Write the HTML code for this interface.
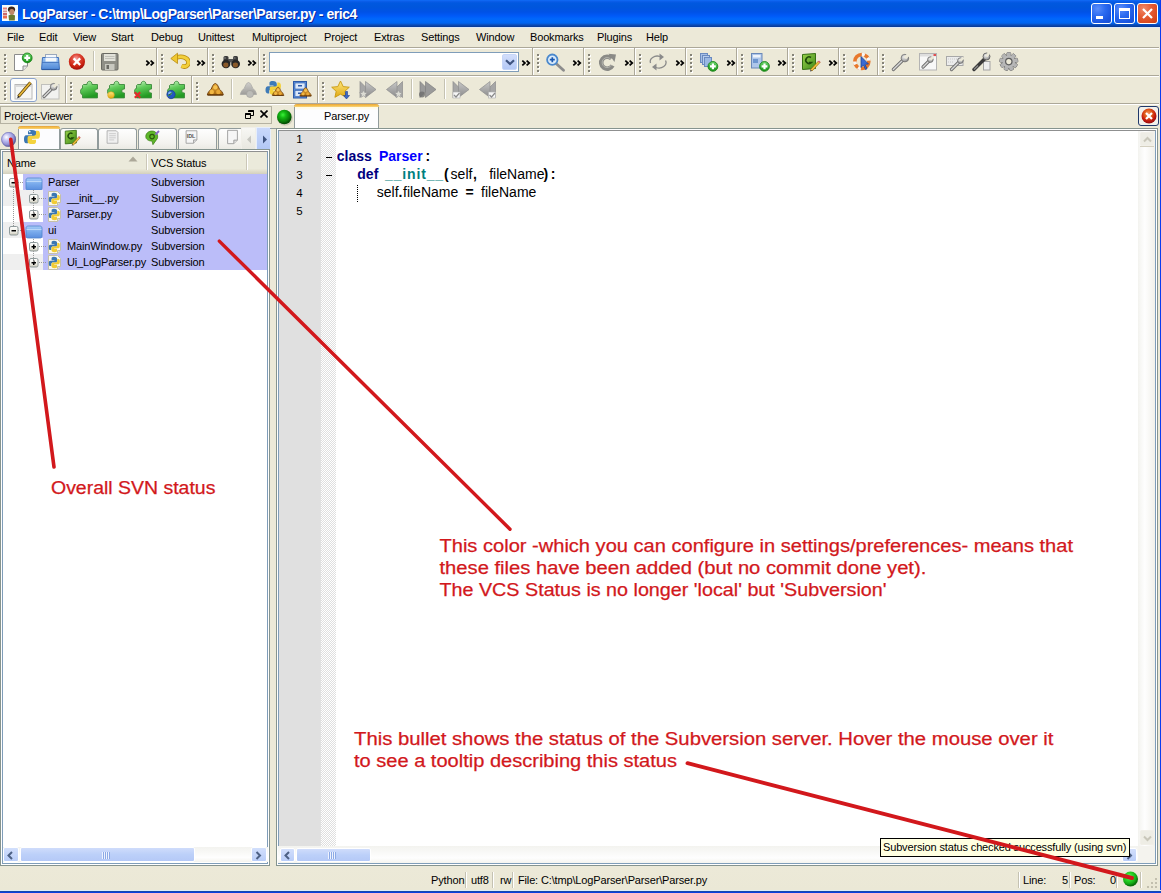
<!DOCTYPE html><html><head><meta charset="utf-8"><style>
*{margin:0;padding:0;box-sizing:border-box}
html,body{width:1161px;height:893px;overflow:hidden;background:#ECE9D8;font-family:"Liberation Sans",sans-serif;font-size:11px;color:#000}
.a{position:absolute}
.t{white-space:pre;line-height:13px;letter-spacing:-0.15px}
</style></head><body>
<div class="a" style="left:0px;top:0px;width:1161px;height:27px;background:linear-gradient(to bottom,#106cf8 0px,#0a5de8 1.5px,#0058e0 3px,#0056dc 7px,#0052e6 12px,#005af8 16px,#0068fc 19px,#0064f0 23px,#0a4ab8 25px,#083890 27px)"></div>
<div class="a" style="left:0px;top:27px;width:1161px;height:1px;background:#dce8f8"></div>
<svg class="a" style="left:2px;top:5px;" width="16" height="16" viewBox="0 0 16 16"><rect x="0" y="0" width="16" height="16" fill="#f4fbfb"/><rect x="1" y="2.5" width="4" height="2" fill="#e88080"/><rect x="1" y="5.5" width="4" height="1.8" fill="#d89090"/><rect x="1" y="8" width="4" height="2.5" fill="#c86a6a"/><rect x="1" y="11" width="4" height="2.5" fill="#e86a50"/><ellipse cx="9.5" cy="4.5" rx="3.6" ry="3" fill="#3a2418"/><ellipse cx="9.8" cy="7" rx="2.6" ry="3" fill="#c08868"/><path d="M6.5 10.5C7 9.5 12.5 9.5 13 10.5L12.8 15.5H7Z" fill="#6a7a30"/></svg>
<div class="a t" style="left:22px;top:8px;color:#fff;font-weight:bold;font-size:14px;text-shadow:1px 1px 0 #0a2a9a;letter-spacing:-0.45px">LogParser - C:\tmp\LogParser\Parser\Parser.py - eric4</div>
<div class="a" style="left:1091px;top:3px;width:21px;height:21px;border:1px solid #fff;border-radius:3px;background:radial-gradient(circle at 30% 25%,#5a8dfb 0%,#2a6af0 40%,#1a55e0 75%,#1b4fd0 100%)"><div class="a" style="left:4px;top:12px;width:7px;height:3px;background:#fff"></div></div>
<div class="a" style="left:1114px;top:3px;width:21px;height:21px;border:1px solid #fff;border-radius:3px;background:radial-gradient(circle at 30% 25%,#5a8dfb 0%,#2a6af0 40%,#1a55e0 75%,#1b4fd0 100%)"><div class="a" style="left:4px;top:4px;width:11px;height:11px;border:1px solid #fff;border-top-width:3px"></div></div>
<div class="a" style="left:1137px;top:3px;width:21px;height:21px;border:1px solid #fff;border-radius:3px;background:radial-gradient(circle at 30% 25%,#f08a6a 0%,#e55d36 40%,#d9491e 75%,#c43c14 100%)"><svg class="a" style="left:3px;top:3px" width="13" height="13" viewBox="0 0 13 13"><path d="M2 2L11 11M11 2L2 11" stroke="#fff" stroke-width="2.2"/></svg></div>
<div class="a" style="left:1160px;top:0px;width:1px;height:893px;background:#0a3cf0"></div>
<div class="a" style="left:0px;top:890px;width:1161px;height:1px;background:#dcecf8"></div>
<div class="a" style="left:0px;top:891px;width:1161px;height:1px;background:#1848a8"></div>
<div class="a" style="left:0px;top:892px;width:1161px;height:1px;background:#0a3ee0"></div>
<div class="a t" style="left:7px;top:31px;">File</div>
<div class="a t" style="left:39px;top:31px;">Edit</div>
<div class="a t" style="left:73px;top:31px;">View</div>
<div class="a t" style="left:111px;top:31px;">Start</div>
<div class="a t" style="left:151px;top:31px;">Debug</div>
<div class="a t" style="left:198px;top:31px;">Unittest</div>
<div class="a t" style="left:252px;top:31px;">Multiproject</div>
<div class="a t" style="left:324px;top:31px;">Project</div>
<div class="a t" style="left:374px;top:31px;">Extras</div>
<div class="a t" style="left:421px;top:31px;">Settings</div>
<div class="a t" style="left:476px;top:31px;">Window</div>
<div class="a t" style="left:530px;top:31px;">Bookmarks</div>
<div class="a t" style="left:597px;top:31px;">Plugins</div>
<div class="a t" style="left:646px;top:31px;">Help</div>
<div class="a" style="left:0px;top:47px;width:1159px;height:1px;background:#aca899"></div>
<div class="a" style="left:0px;top:48px;width:1159px;height:1px;background:#fff"></div>
<div class="a" style="left:0px;top:75px;width:1159px;height:1px;background:#aca899"></div>
<div class="a" style="left:0px;top:76px;width:1159px;height:1px;background:#fff"></div>
<div class="a" style="left:0px;top:103px;width:1159px;height:1px;background:#aca899"></div>
<div class="a" style="left:0px;top:104px;width:1159px;height:1px;background:#fff"></div>
<svg class="a" style="left:0px;top:0px;width:0;height:0" width="1" height="1" viewBox="0 0 1 1"><defs>
<linearGradient id="ggreen" x1="0" y1="0" x2="0" y2="1"><stop offset="0" stop-color="#6fd66f"/><stop offset="1" stop-color="#129312"/></linearGradient>
<radialGradient id="gred" cx="45%" cy="30%" r="70%"><stop offset="0" stop-color="#f6a0a0"/><stop offset=".35" stop-color="#e04a3a"/><stop offset=".75" stop-color="#c8200e"/><stop offset="1" stop-color="#9a0c0c"/></radialGradient>
<linearGradient id="gblue" x1="0" y1="0" x2="0" y2="1"><stop offset="0" stop-color="#9cc4f2"/><stop offset="1" stop-color="#4f88d8"/></linearGradient>
<linearGradient id="gpuz" x1="0" y1="0" x2="0.3" y2="1"><stop offset="0" stop-color="#d2f4cc"/><stop offset=".45" stop-color="#62cc5c"/><stop offset="1" stop-color="#239a23"/></linearGradient>
<linearGradient id="gyel" x1="0" y1="0" x2="0" y2="1"><stop offset="0" stop-color="#ffe880"/><stop offset="1" stop-color="#e0a810"/></linearGradient>
<linearGradient id="gpile" x1="0" y1="0" x2="0" y2="1"><stop offset="0" stop-color="#f0b040"/><stop offset="1" stop-color="#a86a10"/></linearGradient>
<linearGradient id="ggray" x1="0" y1="0" x2="0" y2="1"><stop offset="0" stop-color="#c8c8c8"/><stop offset="1" stop-color="#8a8a8a"/></linearGradient>
<linearGradient id="gsheet" x1="0" y1="0" x2="1" y2="1"><stop offset="0" stop-color="#9ad24a"/><stop offset="1" stop-color="#3f8a1a"/></linearGradient>
<radialGradient id="gsilver" cx="40%" cy="35%" r="70%"><stop offset="0" stop-color="#f0f0f0"/><stop offset="1" stop-color="#8a8a8a"/></radialGradient>
<linearGradient id="gbox" x1="0" y1="0" x2="0" y2="1"><stop offset="0" stop-color="#ffffff"/><stop offset=".6" stop-color="#efeee6"/><stop offset="1" stop-color="#c8c5b6"/></linearGradient>
<linearGradient id="gfold" x1="0" y1="0" x2="0" y2="1"><stop offset="0" stop-color="#a8ccf6"/><stop offset=".5" stop-color="#78aaec"/><stop offset="1" stop-color="#5a8ede"/></linearGradient>
</defs></svg>
<svg class="a" style="left:4px;top:54px;" width="4" height="20" viewBox="0 0 4 20"><rect x="1" y="1" width="2" height="2" fill="#fff"/><rect x="0" y="0" width="2" height="2" fill="#858378"/><rect x="1" y="5" width="2" height="2" fill="#fff"/><rect x="0" y="4" width="2" height="2" fill="#858378"/><rect x="1" y="9" width="2" height="2" fill="#fff"/><rect x="0" y="8" width="2" height="2" fill="#858378"/><rect x="1" y="13" width="2" height="2" fill="#fff"/><rect x="0" y="12" width="2" height="2" fill="#858378"/><rect x="1" y="17" width="2" height="2" fill="#fff"/><rect x="0" y="16" width="2" height="2" fill="#858378"/></svg>
<svg class="a" style="left:13px;top:52px;" width="20" height="20" viewBox="0 0 20 20"><path d="M1.5 2.5H14.5V14L10 18.5H1.5Z" fill="#fff" stroke="#8c8c8c"/><path d="M10 18.5V14H14.5" fill="#e4e4e4" stroke="#8c8c8c"/><circle cx="14.2" cy="5.9" r="4.9" fill="url(#ggreen)" stroke="#0b7a0b" stroke-width=".8"/><path d="M14.2 3.0000000000000004v5.8M11.299999999999999 5.9h5.8" stroke="#fff" stroke-width="2.2"/></svg>
<svg class="a" style="left:40px;top:52px;" width="20" height="20" viewBox="0 0 20 20"><rect x="5.5" y="2.5" width="11" height="8" fill="#f4f8fc" stroke="#9aa8bc"/><path d="M2.5 5.5H18.5L19.5 17.5H1.5Z" fill="url(#gblue)" stroke="#3f70bd"/><path d="M2 10.5H19" stroke="#3f70bd" stroke-width=".8"/><rect x="5.5" y="5.5" width="11" height="4" fill="#f4f8fc"/><path d="M2 17.5H19" stroke="#2f5aa0" stroke-width="1.2"/></svg>
<svg class="a" style="left:68px;top:53px;" width="20" height="20" viewBox="0 0 20 20"><circle cx="8.9" cy="8.7" r="8.1" fill="url(#gred)"/><path d="M5.6 5.4l6.6 6.6M12.2 5.4l-6.6 6.6" stroke="#fff" stroke-width="2.3"/></svg>
<div class="a" style="left:93px;top:51px;width:1px;height:20px;background:#c5c2b2"></div>
<div class="a" style="left:94px;top:51px;width:1px;height:20px;background:#fff"></div>
<svg class="a" style="left:100px;top:52px;" width="20" height="20" viewBox="0 0 20 20"><rect x="1.5" y="1.5" width="16.5" height="16.5" rx="1" fill="#8e8e86" stroke="#6a6a64"/><rect x="4" y="2" width="11.5" height="7" fill="#e2e2da"/><path d="M5 4.5h9.5M5 6.5h9.5" stroke="#b8b8b0" stroke-width=".8"/><rect x="5" y="12" width="9.5" height="6" fill="#c8c8c0"/><rect x="6.5" y="13" width="2.5" height="4" fill="#6a6a64"/></svg>
<svg class="a" style="left:145px;top:60px;" width="10" height="6" viewBox="0 0 10 6"><path d="M1.3 0.6L4 3L1.3 5.4M5.6 0.6L8.3 3L5.6 5.4" fill="none" stroke="#000" stroke-width="1.7" stroke-linejoin="miter"/></svg>
<div class="a" style="left:156px;top:48px;width:1px;height:27px;background:#aca899"></div>
<div class="a" style="left:157px;top:48px;width:1px;height:27px;background:#fff"></div>
<svg class="a" style="left:161px;top:54px;" width="4" height="20" viewBox="0 0 4 20"><rect x="1" y="1" width="2" height="2" fill="#fff"/><rect x="0" y="0" width="2" height="2" fill="#858378"/><rect x="1" y="5" width="2" height="2" fill="#fff"/><rect x="0" y="4" width="2" height="2" fill="#858378"/><rect x="1" y="9" width="2" height="2" fill="#fff"/><rect x="0" y="8" width="2" height="2" fill="#858378"/><rect x="1" y="13" width="2" height="2" fill="#fff"/><rect x="0" y="12" width="2" height="2" fill="#858378"/><rect x="1" y="17" width="2" height="2" fill="#fff"/><rect x="0" y="16" width="2" height="2" fill="#858378"/></svg>
<svg class="a" style="left:170px;top:52px;" width="20" height="20" viewBox="0 0 20 20"><path d="M6 5.5C13 3.5 18.5 6 18.5 10.5C18.5 14 15 15.5 11.5 14" fill="none" stroke="#b88a10" stroke-width="4.6"/><path d="M6 5.5C13 3.5 18.5 6 18.5 10.5C18.5 14 15 15.5 11.5 14" fill="none" stroke="#f2cf3a" stroke-width="3"/><path d="M0.8 6.5L7.5 1.2V11.5Z" fill="#f0c830" stroke="#b88a10" stroke-width=".8"/></svg>
<svg class="a" style="left:196px;top:60px;" width="10" height="6" viewBox="0 0 10 6"><path d="M1.3 0.6L4 3L1.3 5.4M5.6 0.6L8.3 3L5.6 5.4" fill="none" stroke="#000" stroke-width="1.7" stroke-linejoin="miter"/></svg>
<div class="a" style="left:207px;top:48px;width:1px;height:27px;background:#aca899"></div>
<div class="a" style="left:208px;top:48px;width:1px;height:27px;background:#fff"></div>
<svg class="a" style="left:212px;top:54px;" width="4" height="20" viewBox="0 0 4 20"><rect x="1" y="1" width="2" height="2" fill="#fff"/><rect x="0" y="0" width="2" height="2" fill="#858378"/><rect x="1" y="5" width="2" height="2" fill="#fff"/><rect x="0" y="4" width="2" height="2" fill="#858378"/><rect x="1" y="9" width="2" height="2" fill="#fff"/><rect x="0" y="8" width="2" height="2" fill="#858378"/><rect x="1" y="13" width="2" height="2" fill="#fff"/><rect x="0" y="12" width="2" height="2" fill="#858378"/><rect x="1" y="17" width="2" height="2" fill="#fff"/><rect x="0" y="16" width="2" height="2" fill="#858378"/></svg>
<svg class="a" style="left:221px;top:52px;" width="20" height="20" viewBox="0 0 20 20"><rect x="2.5" y="4" width="5" height="6" rx="1.5" fill="#3c3c3c"/><rect x="12" y="4" width="5" height="6" rx="1.5" fill="#3c3c3c"/><rect x="7" y="7" width="5.5" height="3.5" fill="#555"/><ellipse cx="5" cy="12" rx="4.4" ry="4.2" fill="#262626"/><ellipse cx="14.6" cy="12" rx="4.4" ry="4.2" fill="#262626"/><ellipse cx="4.8" cy="13" rx="2.6" ry="2.4" fill="#8a5a2a"/><ellipse cx="14.4" cy="13" rx="2.6" ry="2.4" fill="#8a5a2a"/><path d="M3 6h2M12.5 6h2" stroke="#8a8a8a"/></svg>
<svg class="a" style="left:247px;top:60px;" width="10" height="6" viewBox="0 0 10 6"><path d="M1.3 0.6L4 3L1.3 5.4M5.6 0.6L8.3 3L5.6 5.4" fill="none" stroke="#000" stroke-width="1.7" stroke-linejoin="miter"/></svg>
<div class="a" style="left:258px;top:48px;width:1px;height:27px;background:#aca899"></div>
<div class="a" style="left:259px;top:48px;width:1px;height:27px;background:#fff"></div>
<svg class="a" style="left:263px;top:54px;" width="4" height="20" viewBox="0 0 4 20"><rect x="1" y="1" width="2" height="2" fill="#fff"/><rect x="0" y="0" width="2" height="2" fill="#858378"/><rect x="1" y="5" width="2" height="2" fill="#fff"/><rect x="0" y="4" width="2" height="2" fill="#858378"/><rect x="1" y="9" width="2" height="2" fill="#fff"/><rect x="0" y="8" width="2" height="2" fill="#858378"/><rect x="1" y="13" width="2" height="2" fill="#fff"/><rect x="0" y="12" width="2" height="2" fill="#858378"/><rect x="1" y="17" width="2" height="2" fill="#fff"/><rect x="0" y="16" width="2" height="2" fill="#858378"/></svg>
<div class="a" style="left:269px;top:52px;width:250px;height:20px;border:1px solid #7f9db9;background:#fff"></div>
<div class="a" style="left:502px;top:54px;width:15px;height:16px;border:1px solid #c6d6f8;border-radius:2px;background:linear-gradient(#d2defb,#b4c9f6)"><svg class="a" style="left:2px;top:4px" width="10" height="7" viewBox="0 0 10 7"><path d="M1 1.2l4 3.8l4-3.8" fill="none" stroke="#3f5480" stroke-width="2.2"/></svg></div>
<svg class="a" style="left:521px;top:60px;" width="10" height="6" viewBox="0 0 10 6"><path d="M1.3 0.6L4 3L1.3 5.4M5.6 0.6L8.3 3L5.6 5.4" fill="none" stroke="#000" stroke-width="1.7" stroke-linejoin="miter"/></svg>
<div class="a" style="left:532px;top:48px;width:1px;height:27px;background:#aca899"></div>
<div class="a" style="left:533px;top:48px;width:1px;height:27px;background:#fff"></div>
<svg class="a" style="left:537px;top:54px;" width="4" height="20" viewBox="0 0 4 20"><rect x="1" y="1" width="2" height="2" fill="#fff"/><rect x="0" y="0" width="2" height="2" fill="#858378"/><rect x="1" y="5" width="2" height="2" fill="#fff"/><rect x="0" y="4" width="2" height="2" fill="#858378"/><rect x="1" y="9" width="2" height="2" fill="#fff"/><rect x="0" y="8" width="2" height="2" fill="#858378"/><rect x="1" y="13" width="2" height="2" fill="#fff"/><rect x="0" y="12" width="2" height="2" fill="#858378"/><rect x="1" y="17" width="2" height="2" fill="#fff"/><rect x="0" y="16" width="2" height="2" fill="#858378"/></svg>
<svg class="a" style="left:546px;top:52px;" width="20" height="20" viewBox="0 0 20 20"><path d="M9.8 11.3L17.5 18.2" stroke="#8c8c8c" stroke-width="2.8" stroke-linecap="round"/><circle cx="6.3" cy="7.7" r="5.2" fill="#dcecfa" stroke="#4a88cc" stroke-width="1.8"/><path d="M6.3 5.2v5M3.8 7.7h5" stroke="#1a58b0" stroke-width="1.7"/></svg>
<svg class="a" style="left:572px;top:60px;" width="10" height="6" viewBox="0 0 10 6"><path d="M1.3 0.6L4 3L1.3 5.4M5.6 0.6L8.3 3L5.6 5.4" fill="none" stroke="#000" stroke-width="1.7" stroke-linejoin="miter"/></svg>
<div class="a" style="left:583px;top:48px;width:1px;height:27px;background:#aca899"></div>
<div class="a" style="left:584px;top:48px;width:1px;height:27px;background:#fff"></div>
<svg class="a" style="left:588px;top:54px;" width="4" height="20" viewBox="0 0 4 20"><rect x="1" y="1" width="2" height="2" fill="#fff"/><rect x="0" y="0" width="2" height="2" fill="#858378"/><rect x="1" y="5" width="2" height="2" fill="#fff"/><rect x="0" y="4" width="2" height="2" fill="#858378"/><rect x="1" y="9" width="2" height="2" fill="#fff"/><rect x="0" y="8" width="2" height="2" fill="#858378"/><rect x="1" y="13" width="2" height="2" fill="#fff"/><rect x="0" y="12" width="2" height="2" fill="#858378"/><rect x="1" y="17" width="2" height="2" fill="#fff"/><rect x="0" y="16" width="2" height="2" fill="#858378"/></svg>
<svg class="a" style="left:598px;top:52px;" width="20" height="20" viewBox="0 0 20 20"><path d="M13.5 6.5A6 6 0 1 0 14.5 13.5" fill="none" stroke="#8a8a86" stroke-width="4.5"/><path d="M10.5 1.8L18 2.5L16.5 10Z" fill="#8a8a86"/><path d="M12.8 7.2A5 5 0 1 0 13.5 13" fill="none" stroke="#b4b4ae" stroke-width="1"/></svg>
<svg class="a" style="left:624px;top:60px;" width="10" height="6" viewBox="0 0 10 6"><path d="M1.3 0.6L4 3L1.3 5.4M5.6 0.6L8.3 3L5.6 5.4" fill="none" stroke="#000" stroke-width="1.7" stroke-linejoin="miter"/></svg>
<div class="a" style="left:634px;top:48px;width:1px;height:27px;background:#aca899"></div>
<div class="a" style="left:635px;top:48px;width:1px;height:27px;background:#fff"></div>
<svg class="a" style="left:639px;top:54px;" width="4" height="20" viewBox="0 0 4 20"><rect x="1" y="1" width="2" height="2" fill="#fff"/><rect x="0" y="0" width="2" height="2" fill="#858378"/><rect x="1" y="5" width="2" height="2" fill="#fff"/><rect x="0" y="4" width="2" height="2" fill="#858378"/><rect x="1" y="9" width="2" height="2" fill="#fff"/><rect x="0" y="8" width="2" height="2" fill="#858378"/><rect x="1" y="13" width="2" height="2" fill="#fff"/><rect x="0" y="12" width="2" height="2" fill="#858378"/><rect x="1" y="17" width="2" height="2" fill="#fff"/><rect x="0" y="16" width="2" height="2" fill="#858378"/></svg>
<svg class="a" style="left:648px;top:52px;" width="20" height="20" viewBox="0 0 20 20"><path d="M2.5 11A7 5.5 0 0 1 12 4.5" fill="none" stroke="#8a8a8a" stroke-width="1.3"/><path d="M17.5 8.5A7 5.5 0 0 1 8 15.5" fill="none" stroke="#8a8a8a" stroke-width="1.3"/><path d="M11.5 1.5L16 5L11.5 8.5Z" fill="#8a8a8a"/><path d="M8.5 11.5L4 15L8.5 18.5Z" fill="#8a8a8a"/></svg>
<svg class="a" style="left:675px;top:60px;" width="10" height="6" viewBox="0 0 10 6"><path d="M1.3 0.6L4 3L1.3 5.4M5.6 0.6L8.3 3L5.6 5.4" fill="none" stroke="#000" stroke-width="1.7" stroke-linejoin="miter"/></svg>
<div class="a" style="left:685px;top:48px;width:1px;height:27px;background:#aca899"></div>
<div class="a" style="left:686px;top:48px;width:1px;height:27px;background:#fff"></div>
<svg class="a" style="left:690px;top:54px;" width="4" height="20" viewBox="0 0 4 20"><rect x="1" y="1" width="2" height="2" fill="#fff"/><rect x="0" y="0" width="2" height="2" fill="#858378"/><rect x="1" y="5" width="2" height="2" fill="#fff"/><rect x="0" y="4" width="2" height="2" fill="#858378"/><rect x="1" y="9" width="2" height="2" fill="#fff"/><rect x="0" y="8" width="2" height="2" fill="#858378"/><rect x="1" y="13" width="2" height="2" fill="#fff"/><rect x="0" y="12" width="2" height="2" fill="#858378"/><rect x="1" y="17" width="2" height="2" fill="#fff"/><rect x="0" y="16" width="2" height="2" fill="#858378"/></svg>
<svg class="a" style="left:699px;top:52px;" width="20" height="20" viewBox="0 0 20 20"><rect x="1.5" y="1.5" width="7" height="9" fill="#a6bfe6" stroke="#6a8ac0"/><rect x="3.5" y="3.5" width="7" height="9" fill="#b6ccee" stroke="#6a8ac0"/><rect x="5.5" y="5.5" width="7" height="9" fill="#9ab8e4" stroke="#6a8ac0"/><circle cx="13.9" cy="14.4" r="4.9" fill="url(#ggreen)" stroke="#0b7a0b" stroke-width=".8"/><path d="M13.9 11.5v5.8M11.0 14.4h5.8" stroke="#fff" stroke-width="2.2"/></svg>
<svg class="a" style="left:726px;top:60px;" width="10" height="6" viewBox="0 0 10 6"><path d="M1.3 0.6L4 3L1.3 5.4M5.6 0.6L8.3 3L5.6 5.4" fill="none" stroke="#000" stroke-width="1.7" stroke-linejoin="miter"/></svg>
<div class="a" style="left:736px;top:48px;width:1px;height:27px;background:#aca899"></div>
<div class="a" style="left:737px;top:48px;width:1px;height:27px;background:#fff"></div>
<svg class="a" style="left:741px;top:54px;" width="4" height="20" viewBox="0 0 4 20"><rect x="1" y="1" width="2" height="2" fill="#fff"/><rect x="0" y="0" width="2" height="2" fill="#858378"/><rect x="1" y="5" width="2" height="2" fill="#fff"/><rect x="0" y="4" width="2" height="2" fill="#858378"/><rect x="1" y="9" width="2" height="2" fill="#fff"/><rect x="0" y="8" width="2" height="2" fill="#858378"/><rect x="1" y="13" width="2" height="2" fill="#fff"/><rect x="0" y="12" width="2" height="2" fill="#858378"/><rect x="1" y="17" width="2" height="2" fill="#fff"/><rect x="0" y="16" width="2" height="2" fill="#858378"/></svg>
<svg class="a" style="left:750px;top:52px;" width="20" height="20" viewBox="0 0 20 20"><rect x="1.5" y="1.5" width="10.5" height="14.5" fill="#aec6ea" stroke="#6a88b8"/><rect x="3" y="3" width="7.5" height="2.5" fill="#eef3fb"/><rect x="3" y="7" width="5" height="4" fill="#6e96d0"/><circle cx="14.5" cy="14.4" r="4.9" fill="url(#ggreen)" stroke="#0b7a0b" stroke-width=".8"/><path d="M14.5 11.5v5.8M11.6 14.4h5.8" stroke="#fff" stroke-width="2.2"/></svg>
<svg class="a" style="left:777px;top:60px;" width="10" height="6" viewBox="0 0 10 6"><path d="M1.3 0.6L4 3L1.3 5.4M5.6 0.6L8.3 3L5.6 5.4" fill="none" stroke="#000" stroke-width="1.7" stroke-linejoin="miter"/></svg>
<div class="a" style="left:787px;top:48px;width:1px;height:27px;background:#aca899"></div>
<div class="a" style="left:788px;top:48px;width:1px;height:27px;background:#fff"></div>
<svg class="a" style="left:792px;top:54px;" width="4" height="20" viewBox="0 0 4 20"><rect x="1" y="1" width="2" height="2" fill="#fff"/><rect x="0" y="0" width="2" height="2" fill="#858378"/><rect x="1" y="5" width="2" height="2" fill="#fff"/><rect x="0" y="4" width="2" height="2" fill="#858378"/><rect x="1" y="9" width="2" height="2" fill="#fff"/><rect x="0" y="8" width="2" height="2" fill="#858378"/><rect x="1" y="13" width="2" height="2" fill="#fff"/><rect x="0" y="12" width="2" height="2" fill="#858378"/><rect x="1" y="17" width="2" height="2" fill="#fff"/><rect x="0" y="16" width="2" height="2" fill="#858378"/></svg>
<svg class="a" style="left:801px;top:52px;" width="20" height="20" viewBox="0 0 20 20"><path d="M1.5 2.5L14.5 1.5V16.5L1.5 17.5Z" fill="url(#gsheet)" stroke="#356f12"/><path d="M10 5.5A3.3 3.3 0 1 0 10.5 10.5H8" fill="none" stroke="#1e4a08" stroke-width="1.6"/><path d="M9.5 17.5L17.5 9L19 10.5L11 19Z" fill="#f0c040" stroke="#9a6a10" stroke-width=".7"/><path d="M9.5 17.5L9 19.5L11 19Z" fill="#444"/><path d="M17.5 9L19 10.5" stroke="#e05a7a" stroke-width="1.5"/></svg>
<svg class="a" style="left:828px;top:60px;" width="10" height="6" viewBox="0 0 10 6"><path d="M1.3 0.6L4 3L1.3 5.4M5.6 0.6L8.3 3L5.6 5.4" fill="none" stroke="#000" stroke-width="1.7" stroke-linejoin="miter"/></svg>
<div class="a" style="left:838px;top:48px;width:1px;height:27px;background:#aca899"></div>
<div class="a" style="left:839px;top:48px;width:1px;height:27px;background:#fff"></div>
<svg class="a" style="left:843px;top:54px;" width="4" height="20" viewBox="0 0 4 20"><rect x="1" y="1" width="2" height="2" fill="#fff"/><rect x="0" y="0" width="2" height="2" fill="#858378"/><rect x="1" y="5" width="2" height="2" fill="#fff"/><rect x="0" y="4" width="2" height="2" fill="#858378"/><rect x="1" y="9" width="2" height="2" fill="#fff"/><rect x="0" y="8" width="2" height="2" fill="#858378"/><rect x="1" y="13" width="2" height="2" fill="#fff"/><rect x="0" y="12" width="2" height="2" fill="#858378"/><rect x="1" y="17" width="2" height="2" fill="#fff"/><rect x="0" y="16" width="2" height="2" fill="#858378"/></svg>
<svg class="a" style="left:852px;top:52px;" width="20" height="20" viewBox="0 0 20 20"><circle cx="9.8" cy="9.5" r="7" fill="none" stroke="#e8782c" stroke-width="3.6"/><path d="M9.8 2.5A7 7 0 0 1 16.8 9.5" fill="none" stroke="#f6f6f6" stroke-width="3.6" stroke-dasharray="3 4"/><path d="M2.8 9.5A7 7 0 0 0 9.8 16.5" fill="none" stroke="#f6f6f6" stroke-width="3.6" stroke-dasharray="3 4"/><path d="M9 4.5V15.5L11.5 13L13.5 17.5L15 16.8L13 12.3L16.5 12Z" fill="#3a6ad4" stroke="#1a3a8a" stroke-width=".7"/></svg>
<div class="a" style="left:877px;top:48px;width:1px;height:27px;background:#aca899"></div>
<div class="a" style="left:878px;top:48px;width:1px;height:27px;background:#fff"></div>
<svg class="a" style="left:882px;top:54px;" width="4" height="20" viewBox="0 0 4 20"><rect x="1" y="1" width="2" height="2" fill="#fff"/><rect x="0" y="0" width="2" height="2" fill="#858378"/><rect x="1" y="5" width="2" height="2" fill="#fff"/><rect x="0" y="4" width="2" height="2" fill="#858378"/><rect x="1" y="9" width="2" height="2" fill="#fff"/><rect x="0" y="8" width="2" height="2" fill="#858378"/><rect x="1" y="13" width="2" height="2" fill="#fff"/><rect x="0" y="12" width="2" height="2" fill="#858378"/><rect x="1" y="17" width="2" height="2" fill="#fff"/><rect x="0" y="16" width="2" height="2" fill="#858378"/></svg>
<svg class="a" style="left:891px;top:52px;" width="20" height="20" viewBox="0 0 20 20"><path d="M2.3 17.5L12 8" stroke="#6e6e6e" stroke-width="3.2" stroke-linecap="round"/><path d="M2.3 17.5L12 8" stroke="#d8d8d8" stroke-width="1.4" stroke-linecap="round"/><circle cx="13.9" cy="6.1" r="3.8" fill="url(#gsilver)" stroke="#6e6e6e" stroke-width=".8"/><path d="M13.9 6.1L18.08 1.92" stroke="#ece9d8" stroke-width="3.42"/></svg>
<svg class="a" style="left:918px;top:52px;" width="20" height="20" viewBox="0 0 20 20"><rect x="1.5" y="1.5" width="17" height="16.5" fill="#f8f8f8" stroke="#b4b4b4"/><rect x="2" y="2" width="16" height="2.5" fill="#dedede"/><rect x="15.5" y="2" width="2.5" height="2" fill="#e05050"/><path d="M5 15L11 9" stroke="#6e6e6e" stroke-width="3.2" stroke-linecap="round"/><path d="M5 15L11 9" stroke="#d8d8d8" stroke-width="1.4" stroke-linecap="round"/><circle cx="12.4" cy="7.6" r="2.8" fill="url(#gsilver)" stroke="#6e6e6e" stroke-width=".8"/><path d="M12.4 7.6L15.48 4.5200000000000005" stroke="#ece9d8" stroke-width="2.52"/></svg>
<svg class="a" style="left:945px;top:52px;" width="20" height="20" viewBox="0 0 20 20"><rect x="1.5" y="4.5" width="16.5" height="9" fill="#ececec" stroke="#a8a8a8"/><path d="M3 7h9M3 10h6" stroke="#c8c8c8" stroke-dasharray="1 1"/><path d="M6.5 17.5L14 10" stroke="#6e6e6e" stroke-width="3.2" stroke-linecap="round"/><path d="M6.5 17.5L14 10" stroke="#d8d8d8" stroke-width="1.4" stroke-linecap="round"/><circle cx="15.4" cy="8.6" r="2.8" fill="url(#gsilver)" stroke="#6e6e6e" stroke-width=".8"/><path d="M15.4 8.6L18.48 5.5200000000000005" stroke="#ece9d8" stroke-width="2.52"/></svg>
<svg class="a" style="left:972px;top:52px;" width="20" height="20" viewBox="0 0 20 20"><rect x="11.5" y="9.5" width="6.5" height="8.5" fill="#eeeeee" stroke="#a4a4a4"/><path d="M2 17.5L12.5 7" stroke="#3a3a3a" stroke-width="3.4" stroke-linecap="round"/><path d="M2 17.5L6 13.5" stroke="#8a8a8a" stroke-width="1.4"/><circle cx="14.5" cy="4.5" r="3.5" fill="url(#gsilver)" stroke="#555" stroke-width=".8"/><path d="M14.5 4.5L17 1" stroke="#ece9d8" stroke-width="2.6"/></svg>
<svg class="a" style="left:999px;top:52px;" width="20" height="20" viewBox="0 0 20 20"><g transform="translate(9.8 9.6)"><g fill="#a4a4a4" stroke="#5e5e5e" stroke-width=".8"><rect x="-1.9" y="-9" width="3.8" height="4" rx=".6" transform="rotate(0)"/><rect x="-1.9" y="-9" width="3.8" height="4" rx=".6" transform="rotate(40)"/><rect x="-1.9" y="-9" width="3.8" height="4" rx=".6" transform="rotate(80)"/><rect x="-1.9" y="-9" width="3.8" height="4" rx=".6" transform="rotate(120)"/><rect x="-1.9" y="-9" width="3.8" height="4" rx=".6" transform="rotate(160)"/><rect x="-1.9" y="-9" width="3.8" height="4" rx=".6" transform="rotate(200)"/><rect x="-1.9" y="-9" width="3.8" height="4" rx=".6" transform="rotate(240)"/><rect x="-1.9" y="-9" width="3.8" height="4" rx=".6" transform="rotate(280)"/><rect x="-1.9" y="-9" width="3.8" height="4" rx=".6" transform="rotate(320)"/></g><circle r="6.6" fill="url(#gsilver)" stroke="#5e5e5e" stroke-width=".8"/><g fill="#b4b4b4"><rect x="-1.9" y="-9" width="3.8" height="4" rx=".6" transform="rotate(0)"/><rect x="-1.9" y="-9" width="3.8" height="4" rx=".6" transform="rotate(40)"/><rect x="-1.9" y="-9" width="3.8" height="4" rx=".6" transform="rotate(80)"/><rect x="-1.9" y="-9" width="3.8" height="4" rx=".6" transform="rotate(120)"/><rect x="-1.9" y="-9" width="3.8" height="4" rx=".6" transform="rotate(160)"/><rect x="-1.9" y="-9" width="3.8" height="4" rx=".6" transform="rotate(200)"/><rect x="-1.9" y="-9" width="3.8" height="4" rx=".6" transform="rotate(240)"/><rect x="-1.9" y="-9" width="3.8" height="4" rx=".6" transform="rotate(280)"/><rect x="-1.9" y="-9" width="3.8" height="4" rx=".6" transform="rotate(320)"/></g><circle r="6.1" fill="#b8b8b8"/><circle r="3.2" fill="#ece9d8" stroke="#5e5e5e" stroke-width="1.2"/></g></svg>
<svg class="a" style="left:4px;top:82px;" width="4" height="20" viewBox="0 0 4 20"><rect x="1" y="1" width="2" height="2" fill="#fff"/><rect x="0" y="0" width="2" height="2" fill="#858378"/><rect x="1" y="5" width="2" height="2" fill="#fff"/><rect x="0" y="4" width="2" height="2" fill="#858378"/><rect x="1" y="9" width="2" height="2" fill="#fff"/><rect x="0" y="8" width="2" height="2" fill="#858378"/><rect x="1" y="13" width="2" height="2" fill="#fff"/><rect x="0" y="12" width="2" height="2" fill="#858378"/><rect x="1" y="17" width="2" height="2" fill="#fff"/><rect x="0" y="16" width="2" height="2" fill="#858378"/></svg>
<div class="a" style="left:10px;top:78px;width:27px;height:24px;border:1px solid #8aa2cc;border-radius:3px;background:#fdfdfb"></div>
<svg class="a" style="left:13px;top:80px;" width="20" height="20" viewBox="0 0 20 20"><rect x="2" y="4.5" width="17" height="14.5" fill="#f6f6f4" stroke="#b8b8b8"/><rect x="2.5" y="5" width="16" height="2" fill="#dadada"/><path d="M5.5 16.5L17.5 2.5" stroke="#5a4008" stroke-width="3.2"/><path d="M5.5 16.5L17.5 2.5" stroke="#e8b83a" stroke-width="1.8"/><path d="M4.2 18.5L5 15.5L6.8 17Z" fill="#222"/></svg>
<svg class="a" style="left:40px;top:80px;" width="20" height="20" viewBox="0 0 20 20"><rect x="1.5" y="4.5" width="17.5" height="14.5" fill="#f2f2f0" stroke="#c0c0bc"/><path d="M4 16.5L12 8.5" stroke="#6e6e6e" stroke-width="3.2" stroke-linecap="round"/><path d="M4 16.5L12 8.5" stroke="#d8d8d8" stroke-width="1.4" stroke-linecap="round"/><circle cx="13.7" cy="6.8" r="3.4" fill="url(#gsilver)" stroke="#6e6e6e" stroke-width=".8"/><path d="M13.7 6.8L17.44 3.0599999999999996" stroke="#ece9d8" stroke-width="3.06"/></svg>
<div class="a" style="left:65px;top:76px;width:1px;height:27px;background:#aca899"></div>
<div class="a" style="left:66px;top:76px;width:1px;height:27px;background:#fff"></div>
<svg class="a" style="left:70px;top:82px;" width="4" height="20" viewBox="0 0 4 20"><rect x="1" y="1" width="2" height="2" fill="#fff"/><rect x="0" y="0" width="2" height="2" fill="#858378"/><rect x="1" y="5" width="2" height="2" fill="#fff"/><rect x="0" y="4" width="2" height="2" fill="#858378"/><rect x="1" y="9" width="2" height="2" fill="#fff"/><rect x="0" y="8" width="2" height="2" fill="#858378"/><rect x="1" y="13" width="2" height="2" fill="#fff"/><rect x="0" y="12" width="2" height="2" fill="#858378"/><rect x="1" y="17" width="2" height="2" fill="#fff"/><rect x="0" y="16" width="2" height="2" fill="#858378"/></svg>
<svg class="a" style="left:79px;top:80px;" width="20" height="20" viewBox="0 0 20 20"><path d="M4.5 4.5H8C8 2.5 9 1.3 10.5 1.3C12 1.3 13 2.5 13 4.5H18.5V9C16.8 9 15.8 10 15.8 11C15.8 12 16.8 13 18.5 13V17.9H3.5V14.5C2.2 14.5 1.5 13.5 1.5 11.5C1.5 9.5 2.2 8.5 3.5 8.5V5.5Z" fill="url(#gpuz)" stroke="#3c8a3c" stroke-width=".9"/></svg>
<svg class="a" style="left:106px;top:80px;" width="20" height="20" viewBox="0 0 20 20"><path d="M4.5 4.5H8C8 2.5 9 1.3 10.5 1.3C12 1.3 13 2.5 13 4.5H18.5V9C16.8 9 15.8 10 15.8 11C15.8 12 16.8 13 18.5 13V17.9H3.5V14.5C2.2 14.5 1.5 13.5 1.5 11.5C1.5 9.5 2.2 8.5 3.5 8.5V5.5Z" fill="url(#gpuz)" stroke="#3c8a3c" stroke-width=".9"/><circle cx="5" cy="15" r="3.3" fill="url(#gyel)" stroke="#d8a010" stroke-width=".6"/></svg>
<svg class="a" style="left:133px;top:80px;" width="20" height="20" viewBox="0 0 20 20"><path d="M4.5 4.5H8C8 2.5 9 1.3 10.5 1.3C12 1.3 13 2.5 13 4.5H18.5V9C16.8 9 15.8 10 15.8 11C15.8 12 16.8 13 18.5 13V17.9H3.5V14.5C2.2 14.5 1.5 13.5 1.5 11.5C1.5 9.5 2.2 8.5 3.5 8.5V5.5Z" fill="url(#gpuz)" stroke="#3c8a3c" stroke-width=".9"/><path d="M1.8 12.3L7.2 17.7M7.2 12.3L1.8 17.7" stroke="#e42a2a" stroke-width="2.2"/></svg>
<div class="a" style="left:159px;top:79px;width:1px;height:20px;background:#c5c2b2"></div>
<div class="a" style="left:160px;top:79px;width:1px;height:20px;background:#fff"></div>
<svg class="a" style="left:166px;top:80px;" width="20" height="20" viewBox="0 0 20 20"><path d="M4.5 4.5H8C8 2.5 9 1.3 10.5 1.3C12 1.3 13 2.5 13 4.5H18.5V9C16.8 9 15.8 10 15.8 11C15.8 12 16.8 13 18.5 13V17.9H3.5V14.5C2.2 14.5 1.5 13.5 1.5 11.5C1.5 9.5 2.2 8.5 3.5 8.5V5.5Z" fill="url(#gpuz)" stroke="#3c8a3c" stroke-width=".9"/><circle cx="5" cy="14.5" r="4.2" fill="#2456c0" stroke="#163a8a" stroke-width=".6"/><circle cx="4" cy="13.3" r="1.8" fill="#80b4f2"/><path d="M2 15.5c2 0 3-1 4-3" stroke="#3aa03a" stroke-width="1"/></svg>
<div class="a" style="left:191px;top:76px;width:1px;height:27px;background:#aca899"></div>
<div class="a" style="left:192px;top:76px;width:1px;height:27px;background:#fff"></div>
<svg class="a" style="left:196px;top:82px;" width="4" height="20" viewBox="0 0 4 20"><rect x="1" y="1" width="2" height="2" fill="#fff"/><rect x="0" y="0" width="2" height="2" fill="#858378"/><rect x="1" y="5" width="2" height="2" fill="#fff"/><rect x="0" y="4" width="2" height="2" fill="#858378"/><rect x="1" y="9" width="2" height="2" fill="#fff"/><rect x="0" y="8" width="2" height="2" fill="#858378"/><rect x="1" y="13" width="2" height="2" fill="#fff"/><rect x="0" y="12" width="2" height="2" fill="#858378"/><rect x="1" y="17" width="2" height="2" fill="#fff"/><rect x="0" y="16" width="2" height="2" fill="#858378"/></svg>
<svg class="a" style="left:205px;top:80px;" width="20" height="20" viewBox="0 0 20 20"><g transform="translate(1.8 2.5) scale(1)"><path d="M0.5 12.5C1 9.5 3 8 4.5 6.5C5.5 3.5 7 1 8.5 1C10 1 11.5 3.5 12.5 6.5C14 8 16 9.5 16.5 12.5Z" fill="url(#gpile)" stroke="#6a3a08" stroke-width=".9"/><circle cx="5" cy="9.5" r="2.2" fill="#f2b844"/><circle cx="11.5" cy="9.5" r="2.2" fill="#e8a838"/><circle cx="8.5" cy="5" r="2" fill="#f6c454"/><path d="M1 12.5H16" stroke="#5a3008" stroke-width="1"/></g></svg>
<div class="a" style="left:231px;top:79px;width:1px;height:20px;background:#c5c2b2"></div>
<div class="a" style="left:232px;top:79px;width:1px;height:20px;background:#fff"></div>
<svg class="a" style="left:239px;top:80px;" width="20" height="20" viewBox="0 0 20 20"><g opacity=".8"><path d="M1.3 14.5C2 11 4 9.5 5.5 8C6.5 5 8 2.5 9.5 2.5C11 2.5 12.5 5 13.5 8C15 9.5 17 11 17.5 14.5Z" fill="url(#ggray)" stroke="#9a9a9a" stroke-width=".8"/><circle cx="11" cy="14" r="3.5" fill="#b0b0b0" stroke="#8a8a8a" stroke-width=".6"/></g></svg>
<svg class="a" style="left:265px;top:80px;" width="20" height="20" viewBox="0 0 20 20"><path d="M8 1C4 1 4.5 2.8 4.5 4V5.5H8.5V6.3H3C1.3 6.3 0.5 7.8 0.5 10S1.3 13.5 3 13.5H4.2V11.5C4.2 10.3 5 9.5 6.2 9.5H10C11 9.5 11.8 8.7 11.8 7.7V4C11.8 2.3 10.3 1 8 1Z" fill="#3d7ab8"/><path d="M8.5 15C12.5 15 12 13.2 12 12V10.5H8V9.7H13.5C15.2 9.7 16 8.2 16 6S15.2 2.5 13.5 2.5H12.3V4.5C12.3 5.7 11.5 6.5 10.3 6.5H6.5C5.5 6.5 4.7 7.3 4.7 8.3V12C4.7 13.7 6.2 15 8.5 15Z" fill="#f4d23c"/><g transform="translate(7 6.5) scale(0.72)"><path d="M0.5 12.5C1 9.5 3 8 4.5 6.5C5.5 3.5 7 1 8.5 1C10 1 11.5 3.5 12.5 6.5C14 8 16 9.5 16.5 12.5Z" fill="url(#gpile)" stroke="#6a3a08" stroke-width=".9"/><circle cx="5" cy="9.5" r="2.2" fill="#f2b844"/><circle cx="11.5" cy="9.5" r="2.2" fill="#e8a838"/><circle cx="8.5" cy="5" r="2" fill="#f6c454"/><path d="M1 12.5H16" stroke="#5a3008" stroke-width="1"/></g></svg>
<svg class="a" style="left:292px;top:80px;" width="20" height="20" viewBox="0 0 20 20"><rect x="1.5" y="1.5" width="13" height="16.5" fill="#5c92dc" stroke="#2f5aa8"/><rect x="3" y="3" width="10" height="6" fill="#dbe8fa" stroke="#2f5aa8" stroke-width=".6"/><rect x="3" y="10.5" width="10" height="6" fill="#dbe8fa" stroke="#2f5aa8" stroke-width=".6"/><rect x="6" y="5" width="4" height="1.5" fill="#2f5aa8"/><rect x="6" y="12.5" width="4" height="1.5" fill="#2f5aa8"/><g transform="translate(7.5 7) scale(0.72)"><path d="M0.5 12.5C1 9.5 3 8 4.5 6.5C5.5 3.5 7 1 8.5 1C10 1 11.5 3.5 12.5 6.5C14 8 16 9.5 16.5 12.5Z" fill="url(#gpile)" stroke="#6a3a08" stroke-width=".9"/><circle cx="5" cy="9.5" r="2.2" fill="#f2b844"/><circle cx="11.5" cy="9.5" r="2.2" fill="#e8a838"/><circle cx="8.5" cy="5" r="2" fill="#f6c454"/><path d="M1 12.5H16" stroke="#5a3008" stroke-width="1"/></g></svg>
<div class="a" style="left:317px;top:76px;width:1px;height:27px;background:#aca899"></div>
<div class="a" style="left:318px;top:76px;width:1px;height:27px;background:#fff"></div>
<svg class="a" style="left:322px;top:82px;" width="4" height="20" viewBox="0 0 4 20"><rect x="1" y="1" width="2" height="2" fill="#fff"/><rect x="0" y="0" width="2" height="2" fill="#858378"/><rect x="1" y="5" width="2" height="2" fill="#fff"/><rect x="0" y="4" width="2" height="2" fill="#858378"/><rect x="1" y="9" width="2" height="2" fill="#fff"/><rect x="0" y="8" width="2" height="2" fill="#858378"/><rect x="1" y="13" width="2" height="2" fill="#fff"/><rect x="0" y="12" width="2" height="2" fill="#858378"/><rect x="1" y="17" width="2" height="2" fill="#fff"/><rect x="0" y="16" width="2" height="2" fill="#858378"/></svg>
<svg class="a" style="left:331px;top:80px;" width="20" height="20" viewBox="0 0 20 20"><path d="M9.5 1L12.2 6.6L18.3 7.2L13.8 11.3L15.1 17.3L9.5 14.2L3.9 17.3L5.2 11.3L0.7 7.2L6.8 6.6Z" fill="url(#gyel)" stroke="#c89a10" stroke-width=".9"/><path d="M14.5 11.5V15.5H12.5L15.5 19L18.5 15.5H16.5V11.5Z" fill="#3a68c8" stroke="#1e3e90" stroke-width=".6"/></svg>
<svg class="a" style="left:358px;top:80px;" width="20" height="20" viewBox="0 0 20 20"><path d="M2 1.5L10 9.5L2 17.5Z" fill="#a6a6a6" stroke="#8c8c8c" stroke-width=".7"/><path d="M7.5 1.5L18 9.5L7.5 17.5Z" fill="url(#ggray)" stroke="#8c8c8c" stroke-width=".7"/><path transform="translate(5.5 14) scale(.45)" d="M0-9L2.7-3.4L8.8-2.8L4.3 1.3L5.6 7.3L0 4.2L-5.6 7.3L-4.3 1.3L-8.8-2.8L-2.7-3.4Z" fill="#dcdcd4" stroke="#9a9a9a" stroke-width="1.5"/></svg>
<svg class="a" style="left:385px;top:80px;" width="20" height="20" viewBox="0 0 20 20"><path d="M17.5 1.5L9.5 9.5L17.5 17.5Z" fill="#a6a6a6" stroke="#8c8c8c" stroke-width=".7"/><path d="M12 1.5L1.5 9.5L12 17.5Z" fill="url(#ggray)" stroke="#8c8c8c" stroke-width=".7"/><path transform="translate(13.5 14) scale(.45)" d="M0-9L2.7-3.4L8.8-2.8L4.3 1.3L5.6 7.3L0 4.2L-5.6 7.3L-4.3 1.3L-8.8-2.8L-2.7-3.4Z" fill="#dcdcd4" stroke="#9a9a9a" stroke-width="1.5"/></svg>
<div class="a" style="left:411px;top:79px;width:1px;height:20px;background:#c5c2b2"></div>
<div class="a" style="left:412px;top:79px;width:1px;height:20px;background:#fff"></div>
<svg class="a" style="left:418px;top:80px;" width="20" height="20" viewBox="0 0 20 20"><path d="M2 1.5L10 9.5L2 17.5Z" fill="#9a9a9a" stroke="#808080" stroke-width=".7"/><path d="M7.5 1.5L18 9.5L7.5 17.5Z" fill="#9a9a9a" stroke="#808080" stroke-width=".7"/><circle cx="4" cy="14.5" r="3" fill="#6e6e6e" opacity=".8"/></svg>
<div class="a" style="left:444px;top:79px;width:1px;height:20px;background:#c5c2b2"></div>
<div class="a" style="left:445px;top:79px;width:1px;height:20px;background:#fff"></div>
<svg class="a" style="left:451px;top:80px;" width="20" height="20" viewBox="0 0 20 20"><path d="M2 1.5L10 9.5L2 17.5Z" fill="#a6a6a6" stroke="#8c8c8c" stroke-width=".7"/><path d="M7.5 1.5L18 9.5L7.5 17.5Z" fill="url(#ggray)" stroke="#8c8c8c" stroke-width=".7"/><rect x="2" y="12" width="7" height="6" fill="#f6f6f6" stroke="#b0b0b0" stroke-width=".6"/><path d="M3 15l2 2l3.5-4" fill="none" stroke="#8a8a8a" stroke-width="1.2"/></svg>
<svg class="a" style="left:478px;top:80px;" width="20" height="20" viewBox="0 0 20 20"><path d="M17.5 1.5L9.5 9.5L17.5 17.5Z" fill="#a6a6a6" stroke="#8c8c8c" stroke-width=".7"/><path d="M12 1.5L1.5 9.5L12 17.5Z" fill="url(#ggray)" stroke="#8c8c8c" stroke-width=".7"/><rect x="10.5" y="12" width="7" height="6" fill="#f6f6f6" stroke="#b0b0b0" stroke-width=".6"/><path d="M11.5 15l2 2l3.5-4" fill="none" stroke="#8a8a8a" stroke-width="1.2"/></svg>
<div class="a" style="left:0px;top:106px;width:272px;height:18px;border:1px solid #b5b2a2;background:#ebe8d8"></div>
<div class="a t" style="left:4px;top:110px;letter-spacing:-0.2px">Project-Viewer</div>
<svg class="a" style="left:245px;top:110px;" width="9" height="9" viewBox="0 0 9 9"><path d="M3.5 0.5h5v5h-2.5M0.5 3.5h5v5h-5z" fill="none" stroke="#000"/><path d="M3 1.2h6M0 4.2h6" stroke="#000" stroke-width="1.6"/></svg>
<svg class="a" style="left:260px;top:110px;" width="8" height="8" viewBox="0 0 8 8"><path d="M0.5 0.5l7 7M7.5 0.5l-7 7" stroke="#000" stroke-width="1.6"/></svg>
<svg class="a" style="left:1px;top:132px;" width="17" height="17" viewBox="0 0 17 17"><defs><radialGradient id="gb" cx="35%" cy="35%" r="65%"><stop offset="0" stop-color="#fff"/><stop offset=".35" stop-color="#c4c4f4"/><stop offset=".8" stop-color="#8a8ad0"/><stop offset="1" stop-color="#5a5a90"/></radialGradient></defs><circle cx="7.6" cy="7.4" r="7.4" fill="url(#gb)"/><circle cx="7.6" cy="7.4" r="7" fill="none" stroke="#6a6aa8" stroke-width=".8" opacity=".7"/></svg>
<div class="a" style="left:18px;top:149px;width:253px;height:1px;background:#919b9c"></div>
<div class="a" style="left:60px;top:128px;width:38px;height:22px;border:1px solid #919b9c;border-bottom:none;border-radius:3px 3px 0 0;background:linear-gradient(#fefefe,#f3f2ee 70%,#e9e8e1)"></div>

<div class="a" style="left:98px;top:128px;width:39px;height:22px;border:1px solid #919b9c;border-bottom:none;border-radius:3px 3px 0 0;background:linear-gradient(#fefefe,#f3f2ee 70%,#e9e8e1)"></div>

<div class="a" style="left:138px;top:128px;width:39px;height:22px;border:1px solid #919b9c;border-bottom:none;border-radius:3px 3px 0 0;background:linear-gradient(#fefefe,#f3f2ee 70%,#e9e8e1)"></div>

<div class="a" style="left:178px;top:128px;width:39px;height:22px;border:1px solid #919b9c;border-bottom:none;border-radius:3px 3px 0 0;background:linear-gradient(#fefefe,#f3f2ee 70%,#e9e8e1)"></div>

<div class="a" style="left:218px;top:128px;width:30px;height:22px;border:1px solid #919b9c;border-bottom:none;border-radius:3px 3px 0 0;background:linear-gradient(#fefefe,#f3f2ee 70%,#e9e8e1)"></div>

<div class="a" style="left:18px;top:126px;width:42px;height:25px;border:1px solid #919b9c;border-bottom:none;border-top:none;border-radius:3px 3px 0 0;background:#fcfcfe"><div class="a" style="left:-1px;top:0;width:42px;height:3px;background:linear-gradient(#e2a03e,#f8c24a 55%,#f2d382);border-radius:3px 3px 0 0"></div></div>

<svg class="a" style="left:24px;top:129px" width="16" height="16" viewBox="0 0 18 18"><path d="M8.5 1c-4 0-4 2-4 3v2h4.5v1H2.5c-2 0-2.5 2-2.5 4.5s.5 4.5 2.5 4.5h2v-3c0-1.5 1-2.5 2.5-2.5h4.5c1.5 0 2.5-1 2.5-2.5V4c0-2-2-3-5-3z" fill="#3b77b3"/><path d="M9.5 17c4 0 4-2 4-3v-2H9v-1h6.5c2 0 2.5-2 2.5-4.5S17.5 2 15.5 2h-2v3c0 1.5-1 2.5-2.5 2.5H6.5C5 7.5 4 8.5 4 10v4c0 2 2 3 5.5 3z" fill="#f4d33e"/><circle cx="6.5" cy="3" r=".9" fill="#fff"/></svg>
<svg class="a" style="left:64px;top:129px" width="17" height="17" viewBox="0 0 20 20"><path d="M1.5 2.5L14.5 1.5V16.5L1.5 17.5Z" fill="url(#gsheet)" stroke="#356f12"/><path d="M10 5.5A3.3 3.3 0 1 0 10.5 10.5H8" fill="none" stroke="#1e4a08" stroke-width="1.6"/><path d="M9.5 17.5L17.5 9L19 10.5L11 19Z" fill="#f0c040" stroke="#9a6a10" stroke-width=".7"/><path d="M9.5 17.5L9 19.5L11 19Z" fill="#444"/><path d="M17.5 9L19 10.5" stroke="#e05a7a" stroke-width="1.5"/></svg>
<svg class="a" style="left:105px;top:129px" width="15" height="16" viewBox="0 0 18 18"><path d="M2.5 1.5h11l2 2v13h-13z" fill="#f0f0f0" stroke="#a8a8a8"/><path d="M5 5h8M5 7.5h8M5 10h8M5 12.5h6" stroke="#c4c4c4"/></svg>
<svg class="a" style="left:144px;top:129px" width="17" height="17" viewBox="0 0 19 18"><path d="M2 8c0-5 5-7 9-6c3 1 5 4 4 8l-5 7l-1-4c-4 0-7-2-7-5z" fill="#5fb82a" stroke="#3a7a14" stroke-width=".8"/><circle cx="9" cy="8" r="2.5" fill="none" stroke="#2a5a0a" stroke-width="1.3"/><path d="M12 5l4-4l1.5 1.5l-4 4z" fill="#8a6ac8"/></svg>
<svg class="a" style="left:184px;top:129px" width="15" height="16" viewBox="0 0 18 18"><path d="M2.5 1.5h13v11l-4 4h-9z" fill="#f6f6f6" stroke="#999"/><path d="M11.5 16.5v-4h4" fill="#ddd" stroke="#999"/><text x="3.2" y="10" font-family="Liberation Sans" font-size="6.5" font-weight="bold" fill="#555">IDL</text></svg>
<svg class="a" style="left:225px;top:129px" width="15" height="16" viewBox="0 0 16 18"><path d="M2.5 1.5h11v11l-4 4h-7z" fill="#f6f6f6" stroke="#999"/><path d="M9.5 16.5v-4h4" fill="#ddd" stroke="#999"/></svg>
<div class="a" style="left:241px;top:127px;width:15px;height:23px;background:linear-gradient(#f7f7f4,#e8e7e0);border:1px solid #f0efe9"><svg class="a" style="left:4px;top:7px" width="6" height="9" viewBox="0 0 6 9"><path d="M5 0.5L1 4.5L5 8.5" fill="#c6c6c0"/></svg></div>
<div class="a" style="left:256px;top:127px;width:15px;height:23px;background:linear-gradient(#c9d8fb,#b2c8f6);border:1px solid #e6eefb"><svg class="a" style="left:5px;top:7px" width="6" height="9" viewBox="0 0 6 9"><path d="M1 0.5L5 4.5L1 8.5z" fill="#3f5480"/></svg></div>
<div class="a" style="left:0px;top:149px;width:270px;height:717px;border:1px solid #86948f;background:#fff"></div>
<div class="a" style="left:2px;top:151px;width:266px;height:713px;border:1px solid #7f9db9;border-top-color:#8f9090;background:#fff"></div>
<div class="a" style="left:3px;top:152px;width:264px;height:22px;background:linear-gradient(#ebeadb 0%,#ebeadb 75%,#e2dfcd 86%,#d3d0be 100%)"></div>
<div class="a" style="left:146px;top:154px;width:1px;height:16px;background:#cbc7b8"></div>
<div class="a" style="left:147px;top:154px;width:1px;height:16px;background:#fff"></div>
<div class="a" style="left:246px;top:154px;width:1px;height:16px;background:#cbc7b8"></div>
<div class="a" style="left:247px;top:154px;width:1px;height:16px;background:#fff"></div>
<div class="a t" style="left:7px;top:157px;">Name</div>
<div class="a t" style="left:151px;top:157px;">VCS Status</div>
<svg class="a" style="left:128px;top:156px;" width="10" height="6" viewBox="0 0 10 6"><path d="M0.5 5.5L5 0.5L9.5 5.5z" fill="#aca899"/></svg>
<div class="a" style="left:23px;top:174px;width:244px;height:16px;background:#bbbdf9"></div>
<svg class="a" style="left:9px;top:178px;" width="10" height="10" viewBox="0 0 10 10"><rect x=".5" y=".5" width="8.5" height="8.5" rx="1.5" fill="url(#gbox)" stroke="#8f9a9b"/><path d="M2.5 4.75h4.5" stroke="#000" stroke-width="1.5"/></svg>
<svg class="a" style="left:25px;top:177px;" width="18" height="14" viewBox="0 0 18 14"><path d="M1 3.5C1 1.8 1.8 1 3.5 1H14.5C16.2 1 17 1.8 17 3.5V11C17 12.7 16.2 13 14.5 13H3.5C1.8 13 1 12.7 1 11Z" fill="url(#gfold)" stroke="#4f84cc" stroke-width=".8"/><path d="M1.5 4.5H16.5" stroke="#c8e0fa" stroke-width=".8"/></svg>
<div class="a t" style="left:48px;top:176px;">Parser</div>
<div class="a t" style="left:151px;top:176px;">Subversion</div>
<div class="a" style="left:3px;top:190px;width:264px;height:16px;background:#efefef"></div>
<div class="a" style="left:43px;top:190px;width:224px;height:16px;background:#bbbdf9"></div>
<svg class="a" style="left:29px;top:194px;" width="10" height="10" viewBox="0 0 10 10"><rect x=".5" y=".5" width="8.5" height="8.5" rx="1.5" fill="url(#gbox)" stroke="#8f9a9b"/><path d="M2.5 4.75h4.5M4.75 2.5v4.5" stroke="#000" stroke-width="1.5"/></svg>
<svg class="a" style="left:48px;top:191px;" width="13" height="15" viewBox="0 0 13 15"><path d="M0.5 0.5H9.5L12.5 3.5V11.5L9.5 14.5H0.5Z" fill="#faf8ee" stroke="#c4c0a8"/><path d="M9.5 14.5V11.5H12.5" fill="#e4e0cc" stroke="#c4c0a8"/><path d="M6 1.8C3.5 1.8 3.6 2.8 3.6 3.8V5.2H6.4V5.8H2.2C1 5.8 0.8 7 0.8 8.4S1.1 11 2.2 11H3.3V9.3C3.3 8.3 4 7.6 5 7.6H7.6C8.4 7.6 9.1 7 9.1 6.1V3.8C9.1 2.6 7.9 1.8 6 1.8Z" fill="#3b77b3"/><path d="M6.6 13.2C9.1 13.2 9 12.2 9 11.2V9.8H6.2V9.2H10.4C11.6 9.2 11.8 8 11.8 6.6S11.5 4 10.4 4H9.3V5.7C9.3 6.7 8.6 7.4 7.6 7.4H5C4.2 7.4 3.5 8 3.5 8.9V11.2C3.5 12.4 4.7 13.2 6.6 13.2Z" fill="#f2cc34"/></svg>
<div class="a t" style="left:67px;top:192px;">__init__.py</div>
<div class="a t" style="left:151px;top:192px;">Subversion</div>
<div class="a" style="left:43px;top:206px;width:224px;height:16px;background:#bbbdf9"></div>
<svg class="a" style="left:29px;top:210px;" width="10" height="10" viewBox="0 0 10 10"><rect x=".5" y=".5" width="8.5" height="8.5" rx="1.5" fill="url(#gbox)" stroke="#8f9a9b"/><path d="M2.5 4.75h4.5M4.75 2.5v4.5" stroke="#000" stroke-width="1.5"/></svg>
<svg class="a" style="left:48px;top:207px;" width="13" height="15" viewBox="0 0 13 15"><path d="M0.5 0.5H9.5L12.5 3.5V11.5L9.5 14.5H0.5Z" fill="#faf8ee" stroke="#c4c0a8"/><path d="M9.5 14.5V11.5H12.5" fill="#e4e0cc" stroke="#c4c0a8"/><path d="M6 1.8C3.5 1.8 3.6 2.8 3.6 3.8V5.2H6.4V5.8H2.2C1 5.8 0.8 7 0.8 8.4S1.1 11 2.2 11H3.3V9.3C3.3 8.3 4 7.6 5 7.6H7.6C8.4 7.6 9.1 7 9.1 6.1V3.8C9.1 2.6 7.9 1.8 6 1.8Z" fill="#3b77b3"/><path d="M6.6 13.2C9.1 13.2 9 12.2 9 11.2V9.8H6.2V9.2H10.4C11.6 9.2 11.8 8 11.8 6.6S11.5 4 10.4 4H9.3V5.7C9.3 6.7 8.6 7.4 7.6 7.4H5C4.2 7.4 3.5 8 3.5 8.9V11.2C3.5 12.4 4.7 13.2 6.6 13.2Z" fill="#f2cc34"/></svg>
<div class="a t" style="left:67px;top:208px;">Parser.py</div>
<div class="a t" style="left:151px;top:208px;">Subversion</div>
<div class="a" style="left:3px;top:222px;width:264px;height:16px;background:#efefef"></div>
<div class="a" style="left:23px;top:222px;width:244px;height:16px;background:#bbbdf9"></div>
<svg class="a" style="left:9px;top:226px;" width="10" height="10" viewBox="0 0 10 10"><rect x=".5" y=".5" width="8.5" height="8.5" rx="1.5" fill="url(#gbox)" stroke="#8f9a9b"/><path d="M2.5 4.75h4.5" stroke="#000" stroke-width="1.5"/></svg>
<svg class="a" style="left:25px;top:225px;" width="18" height="14" viewBox="0 0 18 14"><path d="M1 3.5C1 1.8 1.8 1 3.5 1H14.5C16.2 1 17 1.8 17 3.5V11C17 12.7 16.2 13 14.5 13H3.5C1.8 13 1 12.7 1 11Z" fill="url(#gfold)" stroke="#4f84cc" stroke-width=".8"/><path d="M1.5 4.5H16.5" stroke="#c8e0fa" stroke-width=".8"/></svg>
<div class="a t" style="left:48px;top:224px;">ui</div>
<div class="a t" style="left:151px;top:224px;">Subversion</div>
<div class="a" style="left:43px;top:238px;width:224px;height:16px;background:#bbbdf9"></div>
<svg class="a" style="left:29px;top:242px;" width="10" height="10" viewBox="0 0 10 10"><rect x=".5" y=".5" width="8.5" height="8.5" rx="1.5" fill="url(#gbox)" stroke="#8f9a9b"/><path d="M2.5 4.75h4.5M4.75 2.5v4.5" stroke="#000" stroke-width="1.5"/></svg>
<svg class="a" style="left:48px;top:239px;" width="13" height="15" viewBox="0 0 13 15"><path d="M0.5 0.5H9.5L12.5 3.5V11.5L9.5 14.5H0.5Z" fill="#faf8ee" stroke="#c4c0a8"/><path d="M9.5 14.5V11.5H12.5" fill="#e4e0cc" stroke="#c4c0a8"/><path d="M6 1.8C3.5 1.8 3.6 2.8 3.6 3.8V5.2H6.4V5.8H2.2C1 5.8 0.8 7 0.8 8.4S1.1 11 2.2 11H3.3V9.3C3.3 8.3 4 7.6 5 7.6H7.6C8.4 7.6 9.1 7 9.1 6.1V3.8C9.1 2.6 7.9 1.8 6 1.8Z" fill="#3b77b3"/><path d="M6.6 13.2C9.1 13.2 9 12.2 9 11.2V9.8H6.2V9.2H10.4C11.6 9.2 11.8 8 11.8 6.6S11.5 4 10.4 4H9.3V5.7C9.3 6.7 8.6 7.4 7.6 7.4H5C4.2 7.4 3.5 8 3.5 8.9V11.2C3.5 12.4 4.7 13.2 6.6 13.2Z" fill="#f2cc34"/></svg>
<div class="a t" style="left:67px;top:240px;">MainWindow.py</div>
<div class="a t" style="left:151px;top:240px;">Subversion</div>
<div class="a" style="left:3px;top:254px;width:264px;height:16px;background:#efefef"></div>
<div class="a" style="left:43px;top:254px;width:224px;height:16px;background:#bbbdf9"></div>
<svg class="a" style="left:29px;top:258px;" width="10" height="10" viewBox="0 0 10 10"><rect x=".5" y=".5" width="8.5" height="8.5" rx="1.5" fill="url(#gbox)" stroke="#8f9a9b"/><path d="M2.5 4.75h4.5M4.75 2.5v4.5" stroke="#000" stroke-width="1.5"/></svg>
<svg class="a" style="left:48px;top:255px;" width="13" height="15" viewBox="0 0 13 15"><path d="M0.5 0.5H9.5L12.5 3.5V11.5L9.5 14.5H0.5Z" fill="#faf8ee" stroke="#c4c0a8"/><path d="M9.5 14.5V11.5H12.5" fill="#e4e0cc" stroke="#c4c0a8"/><path d="M6 1.8C3.5 1.8 3.6 2.8 3.6 3.8V5.2H6.4V5.8H2.2C1 5.8 0.8 7 0.8 8.4S1.1 11 2.2 11H3.3V9.3C3.3 8.3 4 7.6 5 7.6H7.6C8.4 7.6 9.1 7 9.1 6.1V3.8C9.1 2.6 7.9 1.8 6 1.8Z" fill="#3b77b3"/><path d="M6.6 13.2C9.1 13.2 9 12.2 9 11.2V9.8H6.2V9.2H10.4C11.6 9.2 11.8 8 11.8 6.6S11.5 4 10.4 4H9.3V5.7C9.3 6.7 8.6 7.4 7.6 7.4H5C4.2 7.4 3.5 8 3.5 8.9V11.2C3.5 12.4 4.7 13.2 6.6 13.2Z" fill="#f2cc34"/></svg>
<div class="a t" style="left:67px;top:256px;">Ui_LogParser.py</div>
<div class="a t" style="left:151px;top:256px;">Subversion</div>
<svg class="a" style="left:0px;top:170px;" width="70" height="100" viewBox="0 0 70 100"><path d="M13.5 17v40M33.5 20v4M33.5 33v12M33.5 69v4M33.5 81v12" stroke="#9a9a9a" stroke-dasharray="1 1"/><path d="M18 12.5h6M18 60.5h6M39 28.5h8M39 44.5h8M39 76.5h8M39 92.5h8" stroke="#9a9a9a" stroke-dasharray="1 1"/></svg>
<div class="a" style="left:3px;top:847px;width:265px;height:15px;background:linear-gradient(#f3f3ef,#fefefe 70%,#f5f4ef)"></div>
<div class="a" style="left:3px;top:847px;width:16px;height:15px;border:1px solid #fff;border-radius:2px;background:linear-gradient(#d2dffc,#b9cdf8)"><svg class="a" style="left:3px;top:3px" width="9" height="9" viewBox="0 0 9 9"><path d="M5 1L1.5 4.5L5 8" fill="none" stroke="#4d6185" stroke-width="2"/></svg></div>
<div class="a" style="left:20px;top:847px;width:175px;height:15px;border:1px solid #fff;border-radius:2px;background:linear-gradient(#cfdcfb,#bcd0f9 50%,#b5c9f7)"><svg class="a" style="left:81px;top:4px" width="9" height="7" viewBox="0 0 9 7"><path d="M.5 0v7M2.5 0v7M4.5 0v7M6.5 0v7" stroke="#eef3fe"/><path d="M1.5 0v7M3.5 0v7M5.5 0v7M7.5 0v7" stroke="#8caae6"/></svg></div>
<div class="a" style="left:251px;top:847px;width:16px;height:15px;border:1px solid #fff;border-radius:2px;background:linear-gradient(#d2dffc,#b9cdf8)"><svg class="a" style="left:3px;top:3px" width="9" height="9" viewBox="0 0 9 9"><path d="M1.5 1L5 4.5L1.5 8" fill="none" stroke="#4d6185" stroke-width="2"/></svg></div>
<svg class="a" style="left:276px;top:109px;" width="17" height="17" viewBox="0 0 17 17"><defs><radialGradient id="gg" cx="40%" cy="35%" r="60%"><stop offset="0" stop-color="#3af23a"/><stop offset=".35" stop-color="#14b814"/><stop offset=".8" stop-color="#087a08"/><stop offset="1" stop-color="#045204"/></radialGradient></defs><circle cx="9" cy="9" r="7.8" fill="#b8b5a4" opacity=".6"/><circle cx="8.3" cy="8" r="7.3" fill="url(#gg)"/></svg>
<div class="a" style="left:270px;top:128px;width:7px;height:1px;background:#919b9c"></div>
<div class="a" style="left:294px;top:104px;width:85px;height:25px;border:1px solid #919b9c;border-bottom:none;border-top:none;border-radius:3px 3px 0 0;background:linear-gradient(#fffbe6 0,#fffbe6 4px,#fdfdfe 6px)"><div class="a" style="left:-1px;top:0;width:85px;height:3px;background:linear-gradient(#e2a03e,#f8c24a 55%,#f2d382);border-radius:3px 3px 0 0"></div></div>
<div class="a t" style="left:324px;top:110px;">Parser.py</div>
<div class="a" style="left:1138px;top:106px;width:21px;height:20px;border:1px solid #20386a;border-radius:3px;background:#f2f1ec"><svg class="a" style="left:2px;top:1px" width="16" height="16" viewBox="0 0 16 16"><defs><radialGradient id="rg" cx="45%" cy="35%" r="60%"><stop offset="0" stop-color="#f39a6a"/><stop offset=".4" stop-color="#e0601a"/><stop offset=".75" stop-color="#c81e0e"/><stop offset="1" stop-color="#a01010"/></radialGradient></defs><circle cx="8" cy="8" r="7.5" fill="url(#rg)"/><path d="M5 5l6 6M11 5l-6 6" stroke="#fff" stroke-width="2.2"/></svg></div>
<div class="a" style="left:276px;top:128px;width:882px;height:738px;border:1px solid #86948f;background:#fff"></div>
<div class="a" style="left:278px;top:130px;width:878px;height:734px;border:1px solid #7f9db9;border-top-color:#8f9090;background:#fff"></div>
<div class="a" style="left:279px;top:131px;width:42px;height:715px;background:#e0e0e0"></div>
<div class="a" style="left:321px;top:131px;width:15px;height:715px;background-color:#f4f4f4;background-image:repeating-conic-gradient(#dfdfdf 0 25%,#ffffff 0 50%);background-size:2px 2px"></div>
<svg class="a" style="left:0px;top:0px;" width="1161" height="893" viewBox="0 0 1161 893"><text x="296.3" y="143.0" font-family="Liberation Sans" font-size="11.5">1</text><text x="296.3" y="160.9" font-family="Liberation Sans" font-size="11.5">2</text><text x="296.3" y="178.8" font-family="Liberation Sans" font-size="11.5">3</text><text x="296.3" y="196.7" font-family="Liberation Sans" font-size="11.5">4</text><text x="296.3" y="214.6" font-family="Liberation Sans" font-size="11.5">5</text></svg>
<div class="a" style="left:326px;top:157px;width:6px;height:1px;background:#000"></div>
<div class="a" style="left:326px;top:175px;width:6px;height:1px;background:#000"></div>
<svg class="a" style="left:357px;top:185px;" width="2" height="18" viewBox="0 0 2 18"><path d="M.5 0v18" stroke="#000" stroke-dasharray="1 1"/></svg>
<svg class="a" style="left:0px;top:0px;" width="1161" height="893" viewBox="0 0 1161 893"><text x="336.8" y="161" font-family="Liberation Sans" font-size="14" fill="#00007f" font-weight="bold">class</text><text x="379" y="161" font-family="Liberation Sans" font-size="14" fill="#0000ff" font-weight="bold">Parser</text><text x="425.6" y="161" font-family="Liberation Sans" font-size="14" fill="#000" font-weight="bold">:</text><text x="357.3" y="179" font-family="Liberation Sans" font-size="14" fill="#00007f" font-weight="bold">def</text><text x="385" y="179" font-family="Liberation Sans" font-size="14" fill="#007f7f" font-weight="bold" letter-spacing="0.85">__init__</text><text x="444" y="179" font-family="Liberation Sans" font-size="14" fill="#000" font-weight="bold">(</text><text x="450.6" y="179" font-family="Liberation Sans" font-size="14" fill="#000">self</text><text x="473" y="179" font-family="Liberation Sans" font-size="14" fill="#000" font-weight="bold">,</text><text x="489.2" y="179" font-family="Liberation Sans" font-size="14" fill="#000">fileName</text><text x="543.6" y="179" font-family="Liberation Sans" font-size="14" fill="#000" font-weight="bold">)</text><text x="550.8" y="179" font-family="Liberation Sans" font-size="14" fill="#000" font-weight="bold">:</text><text x="376.8" y="197" font-family="Liberation Sans" font-size="14" fill="#000">self</text><text x="398.6" y="197" font-family="Liberation Sans" font-size="14" fill="#000" font-weight="bold">.</text><text x="403" y="197" font-family="Liberation Sans" font-size="14" fill="#000">fileName</text><text x="465.5" y="197" font-family="Liberation Sans" font-size="14" fill="#000" font-weight="bold">=</text><text x="481.1" y="197" font-family="Liberation Sans" font-size="14" fill="#000">fileName</text></svg>
<div class="a" style="left:1138px;top:131px;width:17px;height:715px;background:linear-gradient(to right,#f3f3ef,#fefefe 40%,#f1f0ea)"></div>
<div class="a" style="left:1140px;top:132px;width:14px;height:14px;border:1px solid #f1efe8;border-radius:2px;background:#eeede5"><svg class="a" style="left:2px;top:3px" width="9" height="7" viewBox="0 0 9 7"><path d="M1 5.5L4.5 2L8 5.5" fill="none" stroke="#c9c7ba" stroke-width="2"/></svg></div>
<div class="a" style="left:1140px;top:146px;width:14px;height:1px;background:#d4d0c0"></div>
<div class="a" style="left:1140px;top:830px;width:14px;height:15px;border:1px solid #f1efe8;border-radius:2px;background:#eeede5"><svg class="a" style="left:2px;top:4px" width="9" height="7" viewBox="0 0 9 7"><path d="M1 1.5L4.5 5L8 1.5" fill="none" stroke="#c9c7ba" stroke-width="2"/></svg></div>
<div class="a" style="left:278px;top:846px;width:860px;height:17px;background:linear-gradient(#f3f3ef,#fefefe 70%,#f5f4ef)"></div>
<div class="a" style="left:280px;top:848px;width:15px;height:14px;border:1px solid #fff;border-radius:2px;background:linear-gradient(#d2dffc,#b9cdf8)"><svg class="a" style="left:3px;top:2px" width="9" height="9" viewBox="0 0 9 9"><path d="M5 1L1.5 4.5L5 8" fill="none" stroke="#4d6185" stroke-width="2"/></svg></div>
<div class="a" style="left:296px;top:848px;width:75px;height:14px;border:1px solid #fff;border-radius:2px;background:linear-gradient(#cfdcfb,#bcd0f9 50%,#b5c9f7)"><svg class="a" style="left:31px;top:3px" width="9" height="7" viewBox="0 0 9 7"><path d="M.5 0v7M2.5 0v7M4.5 0v7M6.5 0v7" stroke="#eef3fe"/><path d="M1.5 0v7M3.5 0v7M5.5 0v7M7.5 0v7" stroke="#8caae6"/></svg></div>
<div class="a" style="left:1122px;top:848px;width:15px;height:14px;border:1px solid #fff;border-radius:2px;background:linear-gradient(#d2dffc,#b9cdf8)"><svg class="a" style="left:3px;top:2px" width="9" height="9" viewBox="0 0 9 9"><path d="M1.5 1L5 4.5L1.5 8" fill="none" stroke="#4d6185" stroke-width="2"/></svg></div>
<div class="a" style="left:1138px;top:846px;width:17px;height:17px;background:#f4f3ee"></div>
<div class="a" style="left:0px;top:866px;width:1159px;height:24px;background:linear-gradient(#ece9d8,#ebe8d6)"></div>
<div class="a t" style="left:431px;top:874px;">Python</div>
<div class="a" style="left:465px;top:872px;width:1px;height:16px;background:#c5c2b2"></div>
<div class="a" style="left:466px;top:872px;width:1px;height:16px;background:#fff"></div>
<div class="a t" style="left:471px;top:874px;">utf8</div>
<div class="a" style="left:492px;top:872px;width:1px;height:16px;background:#c5c2b2"></div>
<div class="a" style="left:493px;top:872px;width:1px;height:16px;background:#fff"></div>
<div class="a t" style="left:500px;top:874px;">rw</div>
<div class="a" style="left:512px;top:872px;width:1px;height:16px;background:#c5c2b2"></div>
<div class="a" style="left:513px;top:872px;width:1px;height:16px;background:#fff"></div>
<div class="a t" style="left:518px;top:874px;">File: C:\tmp\LogParser\Parser\Parser.py</div>
<div class="a" style="left:1018px;top:872px;width:1px;height:16px;background:#c5c2b2"></div>
<div class="a" style="left:1019px;top:872px;width:1px;height:16px;background:#fff"></div>
<div class="a t" style="left:1023px;top:874px;">Line:</div>
<div class="a t" style="left:1062px;top:874px;">5</div>
<div class="a" style="left:1069px;top:872px;width:1px;height:16px;background:#c5c2b2"></div>
<div class="a" style="left:1070px;top:872px;width:1px;height:16px;background:#fff"></div>
<div class="a t" style="left:1074px;top:874px;">Pos:</div>
<div class="a t" style="left:1110px;top:874px;">0</div>
<div class="a" style="left:1116px;top:872px;width:1px;height:16px;background:#c5c2b2"></div>
<div class="a" style="left:1117px;top:872px;width:1px;height:16px;background:#fff"></div>
<svg class="a" style="left:1122px;top:871px;" width="17" height="17" viewBox="0 0 17 17"><defs><radialGradient id="gs" cx="40%" cy="35%" r="60%"><stop offset="0" stop-color="#8aff8a"/><stop offset=".35" stop-color="#2ee02e"/><stop offset=".8" stop-color="#12a812"/><stop offset="1" stop-color="#0a700a"/></radialGradient></defs><circle cx="8.5" cy="8" r="7.5" fill="url(#gs)"/></svg>
<div class="a" style="left:1140px;top:872px;width:1px;height:16px;background:#c5c2b2"></div>
<div class="a" style="left:1141px;top:872px;width:1px;height:16px;background:#fff"></div>
<svg class="a" style="left:1147px;top:878px;" width="11" height="11" viewBox="0 0 11 11"><rect x="8" y="0" width="2" height="2" fill="#c2bfae"/><rect x="8" y="4" width="2" height="2" fill="#c2bfae"/><rect x="4" y="4" width="2" height="2" fill="#c2bfae"/><rect x="8" y="8" width="2" height="2" fill="#c2bfae"/><rect x="4" y="8" width="2" height="2" fill="#c2bfae"/><rect x="0" y="8" width="2" height="2" fill="#c2bfae"/></svg>
<div class="a" style="left:880px;top:838px;width:250px;height:19px;border:1px solid #000;background:#ffffe1"></div>
<div class="a t" style="left:883px;top:841px;">Subversion status checked successfully (using svn)</div>
<svg class="a" style="left:0px;top:0px;" width="1161" height="893" viewBox="0 0 1161 893"><line x1="10.8" y1="139.2" x2="54" y2="467" stroke="#d2181c" stroke-width="3.6" stroke-linecap="round"/><line x1="219.3" y1="241.1" x2="510" y2="529.2" stroke="#d2181c" stroke-width="3.4" stroke-linecap="round"/><line x1="687.5" y1="763.2" x2="1132" y2="878" stroke="#d2181c" stroke-width="3.9" stroke-linecap="round"/><text x="51" y="494" textLength="164.4" lengthAdjust="spacingAndGlyphs" font-family="Liberation Sans" font-size="17.5" fill="#d2181c" stroke="#d2181c" stroke-width="0.25">Overall SVN status</text><text x="439.5" y="552.3" textLength="633.5" lengthAdjust="spacingAndGlyphs" font-family="Liberation Sans" font-size="17.5" fill="#d2181c" stroke="#d2181c" stroke-width="0.25">This color -which you can configure in settings/preferences- means that</text><text x="439.5" y="574" textLength="486.79999999999995" lengthAdjust="spacingAndGlyphs" font-family="Liberation Sans" font-size="17.5" fill="#d2181c" stroke="#d2181c" stroke-width="0.25">these files have been added (but no commit done yet).</text><text x="439.5" y="595.6" textLength="447.0" lengthAdjust="spacingAndGlyphs" font-family="Liberation Sans" font-size="17.5" fill="#d2181c" stroke="#d2181c" stroke-width="0.25">The VCS Status is no longer &#39;local&#39; but &#39;Subversion&#39;</text><text x="354" y="744.5" textLength="699.4000000000001" lengthAdjust="spacingAndGlyphs" font-family="Liberation Sans" font-size="17.5" fill="#d2181c" stroke="#d2181c" stroke-width="0.25">This bullet shows the status of the Subversion server. Hover the mouse over it</text><text x="354" y="766.6" textLength="323" lengthAdjust="spacingAndGlyphs" font-family="Liberation Sans" font-size="17.5" fill="#d2181c" stroke="#d2181c" stroke-width="0.25">to see a tooltip describing this status</text></svg>
</body></html>
